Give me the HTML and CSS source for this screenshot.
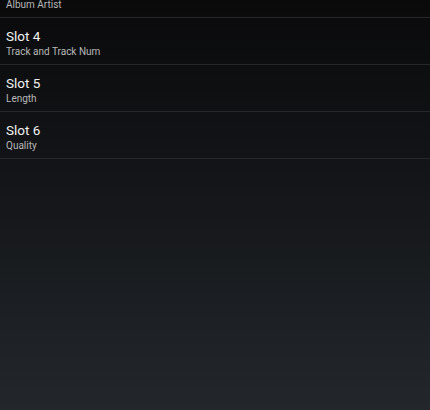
FILE: index.html
```
<!DOCTYPE html>
<html>
<head>
<meta charset="utf-8">
<link rel="stylesheet" href="styles.css">
</head>
<body>
<ul class="list">
  <li class="row"><div class="title">Slot 3</div><div class="sub">Album Artist</div></li>
  <li class="row"><div class="title">Slot 4</div><div class="sub">Track and Track Num</div></li>
  <li class="row"><div class="title">Slot 5</div><div class="sub">Length</div></li>
  <li class="row"><div class="title">Slot 6</div><div class="sub">Quality</div></li>
</ul>
</body>
</html>
```
FILE: styles.css
```
html, body {
  margin: 0;
  padding: 0;
  height: 100%;
}
body {
  background: linear-gradient(to bottom, #0a0a0b 0%, #121417 40%, #23272b 100%);
  font-family: Roboto, "Noto Sans", sans-serif;
  overflow: hidden;
}
.list {
  list-style: none;
  margin: -29px 0 0 0;
  padding: 0;
}
.row {
  height: 47px;
  box-sizing: border-box;
  padding: 10px 6px 0 6px;
  border-bottom: 1px solid #26272a;
}
.title {
  font-size: 13.5px;
  line-height: 17px;
  color: #f2f2f2;
}
.sub {
  font-size: 10px;
  line-height: 13px;
  color: #b8b8b8;
}
```
